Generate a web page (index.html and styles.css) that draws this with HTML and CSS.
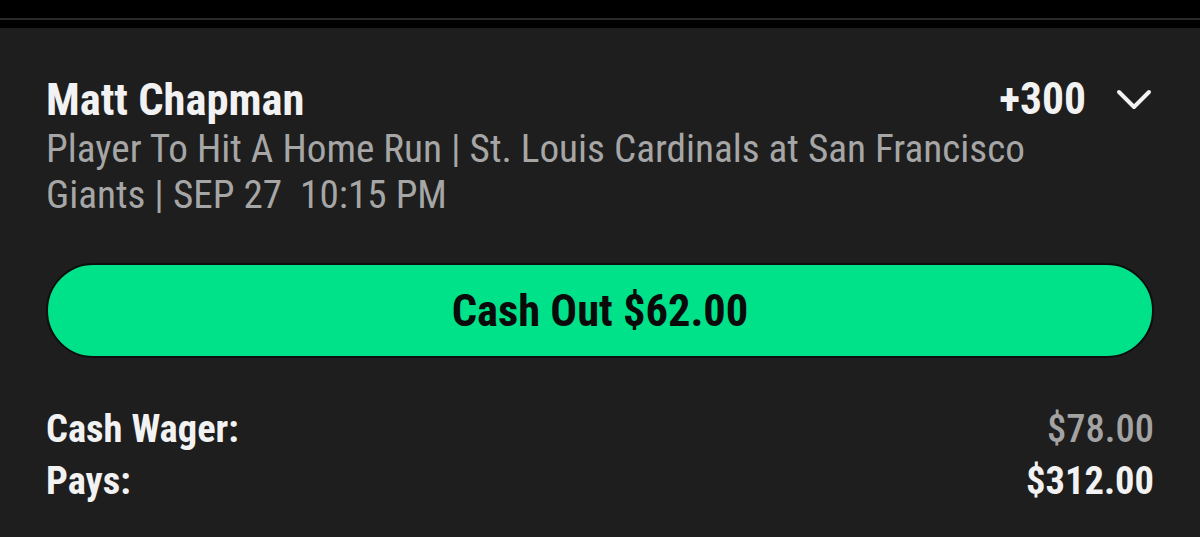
FILE: index.html
```html
<!DOCTYPE html>
<html>
<head>
  <link rel="stylesheet" href="styles.css">
</head>
<body>
  <div class="topbar"><div class="topbar-line"></div></div>
  <div class="bet-card">
    <div class="bet-head">
      <h2 class="player">Matt Chapman</h2>
      <div class="odds">
        <span>+300</span>
        <svg class="chevron" width="36" height="22" viewBox="0 0 36 22">
          <polyline points="3,3 18,18 33,3" fill="none" stroke="#f2f2f2" stroke-width="4" stroke-linecap="round" stroke-linejoin="round"/>
        </svg>
      </div>
    </div>
    <p class="market">Player To Hit A Home Run | St. Louis Cardinals at San Francisco Giants | SEP 27&nbsp; 10:15 PM</p>
    <button class="cashout">Cash Out $62.00</button>
    <div class="summary">
      <div class="summary-row">
        <span class="label">Cash Wager:</span>
        <span class="amount muted">$78.00</span>
      </div>
      <div class="summary-row">
        <span class="label">Pays:</span>
        <span class="amount">$312.00</span>
      </div>
    </div>
  </div>
</body>
</html>
```

FILE: styles.css
```css
html, body {
  background-color: #1e1e1e; /* card grey fills the rest */
}
body {
  margin: 0;
  font-family: "Roboto Condensed", Roboto, sans-serif;
  font-stretch: condensed;
  color: #f2f2f2;
}
.topbar {
  background-color: #000;
  padding-top: 18px;
  padding-bottom: 8px;
}
.topbar-line {
  height: 2px;
  background-color: #2a2a2a;
}
.bet-card {
  padding: 46px 46px 30px;
}
.bet-head {
  display: flex;
  justify-content: space-between;
  align-items: center;
}
.player {
  margin: 0;
  font-size: 44.5px;
  line-height: 50px;
  font-weight: bold;
}
.odds {
  display: flex;
  align-items: center;
  gap: 30px;
  font-size: 43.5px;
  font-weight: bold;
}
.chevron {
  margin-right: 2px;
}
.market {
  margin: 1px 110px 0 0;
  font-size: 39.2px;
  line-height: 46px;
  color: #a6a6a6;
}
.cashout {
  display: block;
  width: 100%;
  height: 95px;
  margin-top: 45px;
  border: 2px solid #0d0d0d;
  border-radius: 48px;
  background-color: #00e28a; /* bright green */
  color: #0a0a0a;
  font-family: inherit;
  font-stretch: inherit;
  font-size: 44.5px;
  font-weight: bold;
}
.summary {
  margin-top: 45px;
}
.summary-row {
  display: flex;
  justify-content: space-between;
  font-size: 38.5px;
  line-height: 52px;
}
.label {
  font-weight: bold;
}
.amount {
  font-weight: bold;
}
.amount.muted {
  font-weight: 500;
  color: #a3a3a3;
}
```
